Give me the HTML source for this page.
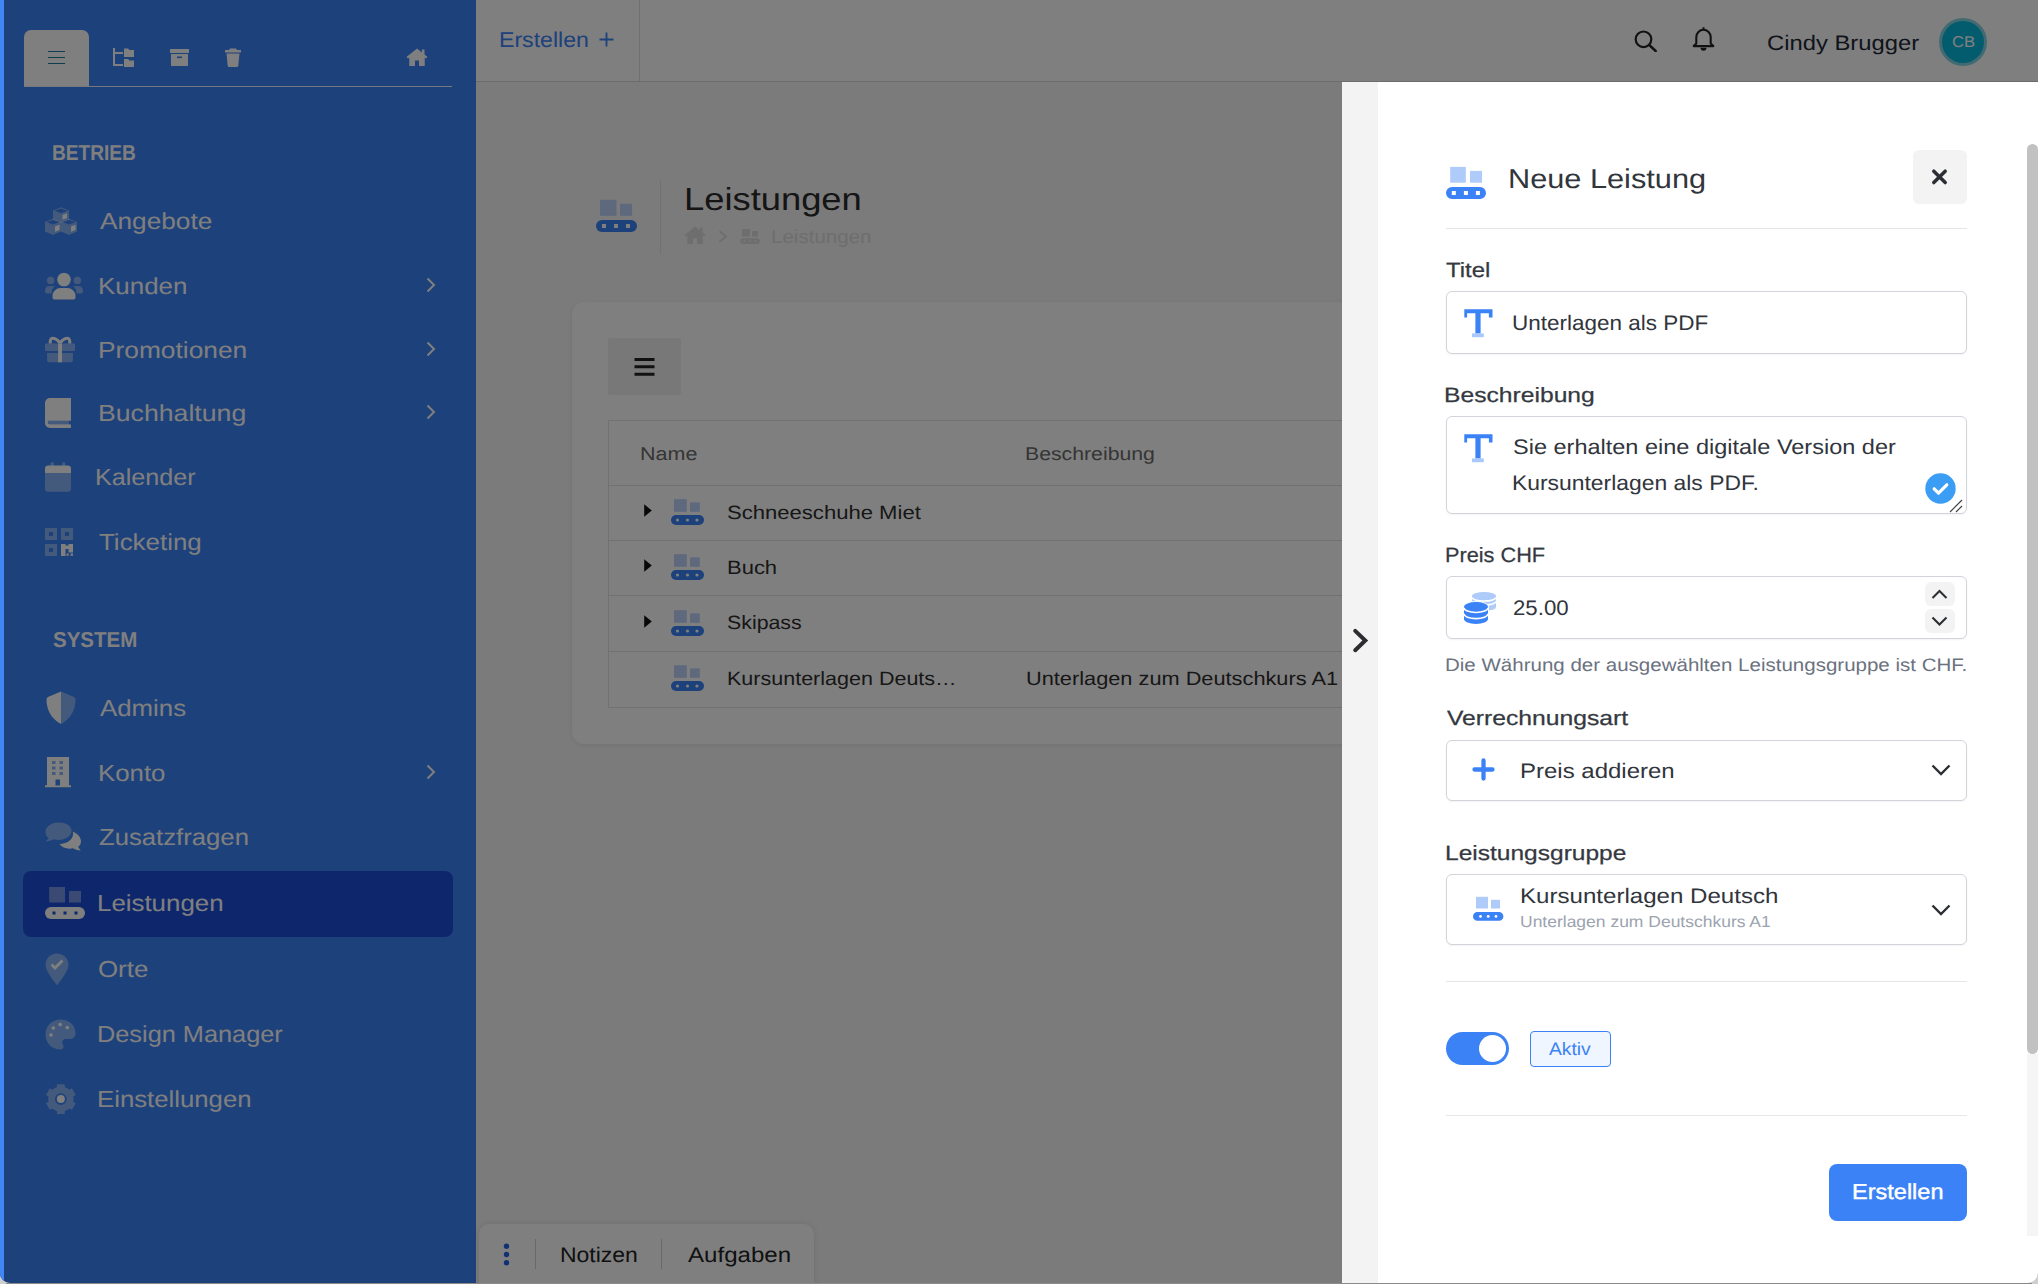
<!DOCTYPE html>
<html><head><meta charset="utf-8"><style>
html,body{margin:0;padding:0;width:2038px;height:1284px;overflow:hidden;background:#cfcfcf}
body{position:relative;font-family:"Liberation Sans", sans-serif}
.t{position:absolute;white-space:nowrap;line-height:1;text-rendering:geometricPrecision}
svg{display:block}
.bl{display:inline-block;width:0;height:0}
#win{position:absolute;left:0;top:0;width:2038px;height:1283px;border-radius:0 0 10px 10px;overflow:hidden}
.med{-webkit-text-stroke:0.35px currentColor}
</style></head><body>
<div id="win">
<div id="page">
<div style="position:absolute;left:476px;top:0px;width:1562px;height:1284px;background:#f6f6f6"></div>
<div style="position:absolute;left:476px;top:0px;width:1562px;height:81px;background:#fff;border-bottom:1px solid #d9d9d9"></div>
<div style="position:absolute;left:639px;top:0px;width:1px;height:81px;background:#e0e0e0"></div>
<div class="t" style="left:499.09px;top:30.01px;font-size:21.44px;color:#3b82f6;font-weight:400;transform:scaleX(1.0781);transform-origin:0 0;">Erstellen<span class="bl"></span></div>
<svg style="position:absolute;left:598px;top:31px;" width="17" height="17" viewBox="0 0 17 17"><path d="M8.5 1.5v14M1.5 8.5h14" stroke="#3b82f6" stroke-width="1.8"/></svg>
<div style="position:absolute;left:0px;top:0px;width:476px;height:1284px;background:#3b82f6"></div>
<div style="position:absolute;left:24px;top:30px;width:65px;height:56px;background:#fff;border-radius:7px 7px 0 0"></div>
<div style="position:absolute;left:24px;top:86px;width:428px;height:1px;background:rgba(255,255,255,0.9)"></div>
<svg style="position:absolute;left:48px;top:50px;" width="17" height="15" viewBox="0 0 17 15"><path d="M0 1.5h17M0 7.5h17M0 13.5h17" stroke="#1d7d9a" stroke-width="1.2"/></svg>
<svg style="position:absolute;left:113px;top:48px;" width="21" height="19" viewBox="0 0 21 19"><path d="M1 0v17h9M1 5h9" stroke="#fff" stroke-width="2" fill="none"/><path d="M11 0.5h4l1.5 1.5h4.5v7h-10z M11 11h4l1.5 1.5h4.5v6.5h-10z" fill="#fff"/></svg>
<svg style="position:absolute;left:170px;top:49px;" width="19" height="17" viewBox="0 0 19 17"><rect x="0" y="0" width="19" height="4" rx="0.5" fill="#fff"/><path d="M1 5h17v12h-17z" fill="#fff"/><rect x="7" y="7.5" width="5" height="1.6" fill="#3b82f6"/></svg>
<svg style="position:absolute;left:225px;top:48px;" width="16" height="19" viewBox="0 0 16 19"><path d="M5 0.5h6l1 1.5h4v2.5h-16v-2.5h4z" fill="#fff"/><path d="M1.5 5.5h13l-1.2 12.2a1.5 1.5 0 0 1-1.5 1.3h-7.6a1.5 1.5 0 0 1-1.5-1.3z" fill="#fff"/></svg>
<svg style="position:absolute;left:406px;top:48px;" width="22" height="18" viewBox="0 0 22 18"><path d="M11 0.5L0.5 9l1.5 1.6 1.3-1v8.4h5.7v-5.5h4v5.5h5.7v-8.4l1.3 1 1.5-1.6-3-2.4v-5h-2.6v3z" fill="#fff"/></svg>
<div class="t" style="left:52.31px;top:143.00px;font-size:21.51px;color:#fff;font-weight:700;transform:scaleX(0.8890);transform-origin:0 0;">BETRIEB<span class="bl"></span></div>
<div class="t" style="left:52.79px;top:630.01px;font-size:21.51px;color:#fff;font-weight:700;transform:scaleX(0.9529);transform-origin:0 0;">SYSTEM<span class="bl"></span></div>
<div style="position:absolute;left:23px;top:871px;width:430px;height:66px;background:#1d4ed8;border-radius:8px"></div>
<div class="t" style="left:99.73px;top:210.01px;font-size:23.11px;color:#fff;font-weight:400;transform:scaleX(1.1351);transform-origin:0 0;">Angebote<span class="bl"></span></div>
<div class="t" style="left:97.66px;top:275.01px;font-size:23.11px;color:#fff;font-weight:400;transform:scaleX(1.1224);transform-origin:0 0;">Kunden<span class="bl"></span></div>
<svg style="position:absolute;left:426px;top:277px;" width="10" height="16" viewBox="0 0 10 16"><path d="M1.5 1.5L8 8l-6.5 6.5" stroke="#fff" stroke-width="2" fill="none"/></svg>
<div class="t" style="left:97.53px;top:339.01px;font-size:23.11px;color:#fff;font-weight:400;transform:scaleX(1.1385);transform-origin:0 0;">Promotionen<span class="bl"></span></div>
<svg style="position:absolute;left:426px;top:341px;" width="10" height="16" viewBox="0 0 10 16"><path d="M1.5 1.5L8 8l-6.5 6.5" stroke="#fff" stroke-width="2" fill="none"/></svg>
<div class="t" style="left:97.50px;top:402.00px;font-size:23.11px;color:#fff;font-weight:400;transform:scaleX(1.1539);transform-origin:0 0;">Buchhaltung<span class="bl"></span></div>
<svg style="position:absolute;left:426px;top:404px;" width="10" height="16" viewBox="0 0 10 16"><path d="M1.5 1.5L8 8l-6.5 6.5" stroke="#fff" stroke-width="2" fill="none"/></svg>
<div class="t" style="left:94.73px;top:466.01px;font-size:23.11px;color:#fff;font-weight:400;transform:scaleX(1.0881);transform-origin:0 0;">Kalender<span class="bl"></span></div>
<div class="t" style="left:99.42px;top:531.00px;font-size:23.11px;color:#fff;font-weight:400;transform:scaleX(1.1215);transform-origin:0 0;">Ticketing<span class="bl"></span></div>
<div class="t" style="left:99.94px;top:697.01px;font-size:23.11px;color:#fff;font-weight:400;transform:scaleX(1.1167);transform-origin:0 0;">Admins<span class="bl"></span></div>
<div class="t" style="left:97.87px;top:762.00px;font-size:23.11px;color:#fff;font-weight:400;transform:scaleX(1.1174);transform-origin:0 0;">Konto<span class="bl"></span></div>
<svg style="position:absolute;left:426px;top:764px;" width="10" height="16" viewBox="0 0 10 16"><path d="M1.5 1.5L8 8l-6.5 6.5" stroke="#fff" stroke-width="2" fill="none"/></svg>
<div class="t" style="left:99.17px;top:826.00px;font-size:23.11px;color:#fff;font-weight:400;transform:scaleX(1.1116);transform-origin:0 0;">Zusatzfragen<span class="bl"></span></div>
<div class="t" style="left:97.37px;top:892.01px;font-size:23.11px;color:#fff;font-weight:400;transform:scaleX(1.1189);transform-origin:0 0;">Leistungen<span class="bl"></span></div>
<div class="t" style="left:98.27px;top:958.01px;font-size:23.11px;color:#fff;font-weight:400;transform:scaleX(1.1188);transform-origin:0 0;">Orte<span class="bl"></span></div>
<div class="t" style="left:97.41px;top:1023.01px;font-size:23.11px;color:#fff;font-weight:400;transform:scaleX(1.0955);transform-origin:0 0;">Design Manager<span class="bl"></span></div>
<div class="t" style="left:97.38px;top:1088.01px;font-size:23.11px;color:#fff;font-weight:400;transform:scaleX(1.1137);transform-origin:0 0;">Einstellungen<span class="bl"></span></div>
<svg style="position:absolute;left:45px;top:207px;" width="32" height="28" viewBox="0 0 32 28"><path d="M8 3.5L16 0.2L24 3.5V12.5L16 16L8 12.5Z" fill="rgba(255,255,255,0.4)"/><path d="M0 15L8 11.8L16 15V24.5L8 28L0 24.5Z" fill="rgba(255,255,255,0.4)"/><path d="M16 15L24 11.8L32 15V24.5L24 28L16 24.5Z" fill="rgba(255,255,255,0.4)"/><path d="M9.6 3.7L16 1.6L22.6 3.7L16 6.3z M1.6 15.1L8 13L14.6 15.1L8 17.4z M17.6 15.1L24 13L30.6 15.1L24 17.4z" fill="#3b82f6"/><path d="M17.5 8L22 6.2V11L17.5 12.8z M10 19.5L14.5 17.7V23L10 24.8z M26 19.5L30.5 17.7V23L26 24.8z" fill="#fff"/></svg>
<svg style="position:absolute;left:45px;top:273px;" width="38" height="27" viewBox="0 0 38 27"><circle cx="19" cy="6.6" r="6.8" fill="#fff"/><path d="M7.5 22.5a8 8 0 0 1 8-7.5h7a8 8 0 0 1 8 7.5v1.5a2.6 2.6 0 0 1-2.6 2.6h-17.8a2.6 2.6 0 0 1-2.6-2.6z" fill="#fff"/><circle cx="5.6" cy="7.4" r="3.7" fill="rgba(255,255,255,0.4)"/><circle cx="32.4" cy="7.4" r="3.7" fill="rgba(255,255,255,0.4)"/><path d="M0 17.5a4.5 4.5 0 0 1 4.5-4.5h5.5a9 9 0 0 0-3.5 7.5h-4.5a2 2 0 0 1-2-2z M38 17.5a4.5 4.5 0 0 0-4.5-4.5h-5.5a9 9 0 0 1 3.5 7.5h4.5a2 2 0 0 0 2-2z" fill="rgba(255,255,255,0.4)"/></svg>
<svg style="position:absolute;left:45px;top:336px;" width="30" height="27" viewBox="0 0 30 27"><rect x="0" y="7.6" width="30" height="7.4" rx="1.2" fill="rgba(255,255,255,0.4)"/><path d="M2.1 17h25.8v7.3a2 2 0 0 1-2 2h-21.8a2 2 0 0 1-2-2z" fill="rgba(255,255,255,0.4)"/><rect x="13.1" y="7.6" width="3.9" height="18.7" fill="#fff"/><path d="M15 7.3C12 2 5.2 0 5.2 5.5V7.6 M15 7.3C18 2 24.8 0 24.8 5.5V7.6" stroke="#fff" stroke-width="3" fill="none"/></svg>
<svg style="position:absolute;left:45px;top:398px;" width="26" height="30" viewBox="0 0 26 30"><path d="M5 0H26V22.5H5A0 0 0 0 0 5 22.5Z" fill="#fff"/><path d="M5 0H26V22.5H4.5a1.5 1.5 0 0 0 0 3.7H24.5a1.9 1.9 0 0 1 0 3.8H5a5 5 0 0 1-5-5V5a5 5 0 0 1 5-5z" fill="#fff"/><path d="M4.5 22.5H24V26.2H4.5a1.85 1.85 0 0 1 0-3.7z" fill="rgba(255,255,255,0.4)"/></svg>
<svg style="position:absolute;left:45px;top:462px;" width="26" height="30" viewBox="0 0 26 30"><path d="M0 11H26V26.5a3.3 3.3 0 0 1-3.3 3.3H3.3A3.3 3.3 0 0 1 0 26.5Z" fill="rgba(255,255,255,0.4)"/><path d="M3.3 3.6H22.7A3.3 3.3 0 0 1 26 6.9V11H0V6.9A3.3 3.3 0 0 1 3.3 3.6Z" fill="#fff"/><rect x="5.6" y="0.2" width="3.3" height="7.5" rx="1" fill="rgba(255,255,255,0.4)"/><rect x="17" y="0.2" width="3.3" height="7.5" rx="1" fill="rgba(255,255,255,0.4)"/></svg>
<svg style="position:absolute;left:45px;top:528px;" width="28" height="28" viewBox="0 0 28 28"><path d="M0 0h12v12h-12z M3.9 3.9v4.2h4.2v-4.2z M16 0h12v12h-12z M19.9 3.9v4.2h4.2v-4.2z M0 16h12v12h-12z M3.9 19.9v4.2h4.2v-4.2z" fill="rgba(255,255,255,0.4)" fill-rule="evenodd"/><path d="M16 16h4.5v1.5h3v-1.5h4.5v8.5h-4.5v-3.5h-3v7h-4.5z M21.5 25.5h2.2v2.2h-2.2z M25.5 25.5h2.5v2.2h-2.5z" fill="#fff"/></svg>
<svg style="position:absolute;left:46px;top:691px;" width="30" height="34" viewBox="0 0 30 34"><path d="M15 0.5L27.5 5.8a3 3 0 0 1 2 2.8c0 9-3.8 19-14.5 24.4z" fill="rgba(255,255,255,0.4)"/><path d="M15 0.5L2.5 5.8a3 3 0 0 0-2 2.8c0 9 3.8 19 14.5 24.4z" fill="#fff"/></svg>
<svg style="position:absolute;left:45px;top:757px;" width="26" height="31" viewBox="0 0 26 31"><path d="M2 0h22v28.2h2v2h-26v-2h2z" fill="#fff"/><path d="M7 4h3.5v3h-3.5z M14.5 4h3.5v3h-3.5z M7 9.5h3.5v3h-3.5z M14.5 9.5h3.5v3h-3.5z M7 15h3.5v3h-3.5z M14.5 15h3.5v3h-3.5z" fill="#3b82f6" fill-opacity="0.6"/><rect x="10.5" y="22.5" width="4.5" height="6" fill="#3b82f6"/></svg>
<svg style="position:absolute;left:45px;top:822px;" width="37" height="30" viewBox="0 0 37 30"><path d="M13.5 0.5C6 0.5 0.5 4.8 0.5 10c0 2.5 1.2 4.7 3.2 6.3L0.5 19.5c2.5 0 6.3-1 8.5-2.2 1.4.4 2.9.6 4.5.6 7.5 0 13-4.2 13-9.2S21 0.5 13.5 0.5z" fill="rgba(255,255,255,0.4)"/><path d="M27.8 9.5c.2.6.3 1.3.3 2 0 6-6 10.3-13.5 10.5 1.9 2.8 5.6 4.7 9.9 4.7 1.2 0 2.4-.2 3.5-.5 1.7 1.1 4.3 2.3 7.7 2.3l-2.6-3.4c1.8-1.4 2.9-3.3 2.9-5.5 0-4.3-3.2-7.8-8.2-10.1z" fill="#fff"/></svg>
<svg style="position:absolute;left:45px;top:887px;" width="40" height="32" viewBox="0 0 40 32"><rect x="4.2" y="0" width="15.8" height="15.5" fill="rgba(255,255,255,0.4)"/><rect x="24" y="4" width="12" height="11.5" fill="rgba(255,255,255,0.4)"/><path d="M6 20h28a6 6 0 0 1 0 12h-28a6 6 0 0 1 0-12z" fill="#fff"/><rect x="7.5" y="24.5" width="3" height="3" fill="#1d4ed8"/><rect x="18.5" y="24.5" width="3" height="3" fill="#1d4ed8"/><rect x="29.5" y="24.5" width="3" height="3" fill="#1d4ed8"/></svg>
<svg style="position:absolute;left:45px;top:953px;" width="24" height="33" viewBox="0 0 24 33"><path d="M12 0.5C5.6 0.5 0.5 5.5 0.5 11.8c0 5.6 6.6 14.2 11.5 20.4 4.9-6.2 11.5-14.8 11.5-20.4C23.5 5.5 18.4 0.5 12 0.5z" fill="rgba(255,255,255,0.4)"/><path d="M6.5 11.5l3.5 3.5 7.5-7.5" stroke="#fff" stroke-width="2.8" fill="none"/></svg>
<svg style="position:absolute;left:45px;top:1019px;" width="31" height="31" viewBox="0 0 31 31"><path d="M15.5 0.5C7 0.5 0.5 7 0.5 15.5c0 8.5 6.5 15 15 15 2 0 3-1.3 3-2.9 0-1.6-1.3-2.6-1.3-4.2 0-1.8 1.4-3.3 3.3-3.3h4.5c3.2 0 5.5-2.4 5.5-5.5C30.5 6 23.8 0.5 15.5 0.5z" fill="rgba(255,255,255,0.4)"/><circle cx="6" cy="16" r="1.8" fill="#fff"/><circle cx="8.3" cy="9" r="1.8" fill="#fff"/><circle cx="15.2" cy="5.6" r="1.8" fill="#fff"/><circle cx="22.3" cy="8.6" r="1.8" fill="#fff"/></svg>
<svg style="position:absolute;left:46px;top:1083px;" width="31" height="31" viewBox="0 0 31 31"><path d="M10.89 4.14 L11.04 1.18 L18.66 1.18 L18.81 4.14 L20.01 4.60 L21.15 5.19 L22.23 5.88 L23.23 6.69 L25.87 5.34 L29.68 11.94 L27.19 13.55 L27.38 14.82 L27.45 16.10 L27.38 17.38 L27.19 18.65 L29.68 20.26 L25.87 26.86 L23.23 25.51 L22.23 26.32 L21.15 27.01 L20.01 27.60 L18.81 28.06 L18.66 31.02 L11.04 31.02 L10.89 28.06 L9.69 27.60 L8.55 27.01 L7.47 26.32 L6.47 25.51 L3.83 26.86 L0.02 20.26 L2.51 18.65 L2.32 17.38 L2.25 16.10 L2.32 14.82 L2.51 13.55 L0.02 11.94 L3.83 5.34 L6.47 6.69 L7.47 5.88 L8.55 5.19 L9.69 4.60Z M20.75 16.10 A5.9 5.9 0 1 0 8.95 16.10 A5.9 5.9 0 1 0 20.75 16.10Z" fill="rgba(255,255,255,0.4)" fill-rule="evenodd"/><circle cx="14.85" cy="16.1" r="4" fill="#fff"/></svg>
<svg style="position:absolute;left:1634px;top:30px;" width="24" height="22" viewBox="0 0 24 22"><circle cx="9.5" cy="9.3" r="7.8" stroke="#222" stroke-width="2.2" fill="none"/><path d="M15.2 15l6.5 6" stroke="#222" stroke-width="2.4" stroke-linecap="round"/></svg>
<svg style="position:absolute;left:1692px;top:26px;" width="23" height="25" viewBox="0 0 23 25"><path d="M11.5 1.2v2.2M4.3 17.5V11a7.2 7.2 0 0 1 14.4 0v6.5l2.6 2.6H1.7z" stroke="#222" stroke-width="2.1" fill="none" stroke-linejoin="round"/><path d="M8.5 21.8a3 3 0 0 0 6 0z" fill="#222"/></svg>
<div class="t" style="left:1767.41px;top:34.01px;font-size:20.93px;color:#1f2937;font-weight:400;transform:scaleX(1.1379);transform-origin:0 0;">Cindy Brugger<span class="bl"></span></div>
<div style="position:absolute;left:1939px;top:18px;width:48px;height:48px;border-radius:50%;background:#84d4e4"></div>
<div style="position:absolute;left:1942px;top:21px;width:42px;height:42px;border-radius:50%;background:#04b8dc"></div>
<div class="t" style="left:1952.07px;top:35.00px;font-size:15.70px;color:#ffffff;font-weight:400;transform:scaleX(1.0588);transform-origin:0 0;">CB<span class="bl"></span></div>
<svg style="position:absolute;left:596px;top:199px;" width="41" height="33" viewBox="0 0 41 33"><rect x="4" y="0.8" width="16.5" height="16" fill="#bcd3fb"/><rect x="24" y="4.8" width="12.1" height="12" fill="#bcd3fb"/><path d="M6 21h29a6 6 0 0 1 0 12h-29a6 6 0 0 1 0-12z" fill="#3b82f6"/><rect x="6" y="25" width="4" height="4" fill="#fff"/><rect x="18" y="25" width="4" height="4" fill="#fff"/><rect x="30" y="25" width="4" height="4" fill="#fff"/></svg>
<div style="position:absolute;left:660px;top:180px;width:1px;height:74px;background:#e3e3e3"></div>
<div class="t" style="left:683.80px;top:184.01px;font-size:31.83px;color:#2a2a2a;font-weight:400;transform:scaleX(1.1414);transform-origin:0 0;">Leistungen<span class="bl"></span></div>
<svg style="position:absolute;left:684px;top:226px;" width="22" height="18" viewBox="0 0 22 18"><path d="M11 0.5L0.5 9l1.5 1.6 1.3-1v8.4h5.7v-5.5h4v5.5h5.7v-8.4l1.3 1 1.5-1.6-3-2.4v-5h-2.6v3z" fill="#dcdcdc"/></svg>
<svg style="position:absolute;left:718px;top:230px;" width="10" height="13" viewBox="0 0 10 13"><path d="M1.5 1.2L8 6.5l-6.5 5.3" stroke="#dcdcdc" stroke-width="2" fill="none"/></svg>
<svg style="position:absolute;left:740px;top:229px;" width="20" height="15" viewBox="0 0 20 15"><rect x="2" y="0" width="8" height="7.5" fill="#dcdcdc"/><rect x="12" y="2" width="6" height="5.5" fill="#dcdcdc"/><path d="M3 9.2h14a2.9 2.9 0 0 1 0 5.8h-14a2.9 2.9 0 0 1 0-5.8z" fill="#dcdcdc"/><circle cx="4.5" cy="12.1" r="0.9" fill="#f6f6f6"/><circle cx="10" cy="12.1" r="0.9" fill="#f6f6f6"/><circle cx="15.5" cy="12.1" r="0.9" fill="#f6f6f6"/></svg>
<div class="t" style="left:771.30px;top:228.00px;font-size:18.82px;color:#dcdcdc;font-weight:400;transform:scaleX(1.0917);transform-origin:0 0;">Leistungen<span class="bl"></span></div>
<div style="position:absolute;left:572px;top:302px;width:1000px;height:442px;background:#fff;border-radius:12px;box-shadow:0 1px 4px rgba(0,0,0,0.08)"></div>
<div style="position:absolute;left:608px;top:338px;width:73px;height:57px;background:#f0f0f0;border-radius:2px"></div>
<svg style="position:absolute;left:634px;top:358px;" width="21" height="18" viewBox="0 0 21 18"><path d="M0.5 1.5h20M0.5 8.8h20M0.5 16.2h20" stroke="#222" stroke-width="3"/></svg>
<div style="position:absolute;left:608px;top:420px;width:800px;height:288px;border:1px solid #e3e3e3;border-right:none;box-sizing:border-box"></div>
<div style="position:absolute;left:609px;top:485px;width:800px;height:1px;background:#e3e3e3"></div>
<div style="position:absolute;left:609px;top:540px;width:800px;height:1px;background:#e3e3e3"></div>
<div style="position:absolute;left:609px;top:595px;width:800px;height:1px;background:#e3e3e3"></div>
<div style="position:absolute;left:609px;top:651px;width:800px;height:1px;background:#e3e3e3"></div>
<div class="t" style="left:639.72px;top:445.01px;font-size:18.39px;color:#6b6b6b;font-weight:400;transform:scaleX(1.1722);transform-origin:0 0;">Name<span class="bl"></span></div>
<div class="t" style="left:1025.25px;top:445.01px;font-size:18.39px;color:#6b6b6b;font-weight:400;transform:scaleX(1.1561);transform-origin:0 0;">Beschreibung<span class="bl"></span></div>
<svg style="position:absolute;left:644px;top:504px;" width="8" height="13" viewBox="0 0 8 13"><path d="M0.2 0.2L7.8 6.5L0.2 12.8z" fill="#111"/></svg>
<svg style="position:absolute;left:671px;top:499px;" width="33" height="27" viewBox="0 0 33 27"><rect x="3" y="0.2" width="12.8" height="12.6" fill="#bcd3fb"/><rect x="19" y="3.4" width="9.8" height="9.4" fill="#bcd3fb"/><path d="M5 16h23a5 5 0 0 1 0 10h-23a5 5 0 0 1 0-10z" fill="#3b82f6"/><circle cx="6.5" cy="21" r="1.6" fill="#fff"/><circle cx="16.5" cy="21" r="1.6" fill="#fff"/><circle cx="26" cy="21" r="1.6" fill="#fff"/></svg>
<div class="t" style="left:727.41px;top:504.01px;font-size:19.19px;color:#2e2e2e;font-weight:400;transform:scaleX(1.1499);transform-origin:0 0;">Schneeschuhe Miet<span class="bl"></span></div>
<svg style="position:absolute;left:644px;top:559px;" width="8" height="13" viewBox="0 0 8 13"><path d="M0.2 0.2L7.8 6.5L0.2 12.8z" fill="#111"/></svg>
<svg style="position:absolute;left:671px;top:554px;" width="33" height="27" viewBox="0 0 33 27"><rect x="3" y="0.2" width="12.8" height="12.6" fill="#bcd3fb"/><rect x="19" y="3.4" width="9.8" height="9.4" fill="#bcd3fb"/><path d="M5 16h23a5 5 0 0 1 0 10h-23a5 5 0 0 1 0-10z" fill="#3b82f6"/><circle cx="6.5" cy="21" r="1.6" fill="#fff"/><circle cx="16.5" cy="21" r="1.6" fill="#fff"/><circle cx="26" cy="21" r="1.6" fill="#fff"/></svg>
<div class="t" style="left:726.59px;top:559.00px;font-size:19.19px;color:#2e2e2e;font-weight:400;transform:scaleX(1.1452);transform-origin:0 0;">Buch<span class="bl"></span></div>
<svg style="position:absolute;left:644px;top:615px;" width="8" height="13" viewBox="0 0 8 13"><path d="M0.2 0.2L7.8 6.5L0.2 12.8z" fill="#111"/></svg>
<svg style="position:absolute;left:671px;top:610px;" width="33" height="27" viewBox="0 0 33 27"><rect x="3" y="0.2" width="12.8" height="12.6" fill="#bcd3fb"/><rect x="19" y="3.4" width="9.8" height="9.4" fill="#bcd3fb"/><path d="M5 16h23a5 5 0 0 1 0 10h-23a5 5 0 0 1 0-10z" fill="#3b82f6"/><circle cx="6.5" cy="21" r="1.6" fill="#fff"/><circle cx="16.5" cy="21" r="1.6" fill="#fff"/><circle cx="26" cy="21" r="1.6" fill="#fff"/></svg>
<div class="t" style="left:727.44px;top:614.01px;font-size:19.19px;color:#2e2e2e;font-weight:400;transform:scaleX(1.1117);transform-origin:0 0;">Skipass<span class="bl"></span></div>
<svg style="position:absolute;left:671px;top:665px;" width="33" height="27" viewBox="0 0 33 27"><rect x="3" y="0.2" width="12.8" height="12.6" fill="#bcd3fb"/><rect x="19" y="3.4" width="9.8" height="9.4" fill="#bcd3fb"/><path d="M5 16h23a5 5 0 0 1 0 10h-23a5 5 0 0 1 0-10z" fill="#3b82f6"/><circle cx="6.5" cy="21" r="1.6" fill="#fff"/><circle cx="16.5" cy="21" r="1.6" fill="#fff"/><circle cx="26" cy="21" r="1.6" fill="#fff"/></svg>
<div class="t" style="left:726.63px;top:670.00px;font-size:19.19px;color:#2e2e2e;font-weight:400;transform:scaleX(1.1212);transform-origin:0 0;">Kursunterlagen Deuts…<span class="bl"></span></div>
<div class="t" style="left:1025.51px;top:670.00px;font-size:19.19px;color:#2e2e2e;font-weight:400;transform:scaleX(1.1341);transform-origin:0 0;">Unterlagen zum Deutschkurs A1<span class="bl"></span></div>
<div style="position:absolute;left:479px;top:1224px;width:335px;height:70px;background:#fff;border-radius:10px;box-shadow:0 0 6px rgba(0,0,0,0.1)"></div>
<svg style="position:absolute;left:502px;top:1243px;" width="9" height="23" viewBox="0 0 9 23"><circle cx="4.5" cy="3.2" r="2.7" fill="#2563eb"/><circle cx="4.5" cy="11.5" r="2.7" fill="#2563eb"/><circle cx="4.5" cy="19.8" r="2.7" fill="#2563eb"/></svg>
<div style="position:absolute;left:535px;top:1239px;width:1px;height:30px;background:#d0d0d0"></div>
<div style="position:absolute;left:661px;top:1239px;width:1px;height:30px;background:#d0d0d0"></div>
<div class="t" style="left:559.60px;top:1245.00px;font-size:21.22px;color:#222;font-weight:400;transform:scaleX(1.0827);transform-origin:0 0;">Notizen<span class="bl"></span></div>
<div class="t" style="left:687.74px;top:1245.00px;font-size:21.22px;color:#222;font-weight:400;transform:scaleX(1.1343);transform-origin:0 0;">Aufgaben<span class="bl"></span></div>
</div>
<div style="position:absolute;left:0px;top:0px;width:2038px;height:1284px;background:rgba(0,0,0,0.5)"></div>
<div style="position:absolute;left:0px;top:0px;width:4px;height:1284px;background:#4285f4"></div>
<div style="position:absolute;left:1342px;top:82px;width:696px;height:1202px;background:#fff"></div>
<div style="position:absolute;left:1342px;top:82px;width:36px;height:1202px;background:#f3f3f3"></div>
<svg style="position:absolute;left:1351px;top:628px;" width="18" height="26" viewBox="0 0 18 26"><path d="M4.2 2.9L14.3 12.5L4.2 22.2" stroke="#2b2d31" stroke-width="4" fill="none" stroke-linecap="round" stroke-linejoin="miter"/></svg>
<svg style="position:absolute;left:1445px;top:166px;" width="42" height="34" viewBox="0 0 42 34"><rect x="5.2" y="0.9" width="15.6" height="15.8" fill="#aecbfa"/><rect x="25" y="4.9" width="12" height="11.8" fill="#aecbfa"/><path d="M6.9 21.1h28.2a5.9 5.9 0 0 1 0 11.8h-28.2a5.9 5.9 0 0 1 0-11.8z" fill="#3b82f6"/><rect x="6.8" y="25" width="4" height="4" fill="#fff"/><rect x="18.9" y="25" width="4" height="4" fill="#fff"/><rect x="30.9" y="25" width="4" height="4" fill="#fff"/></svg>
<div class="t" style="left:1508.37px;top:165.01px;font-size:27.18px;color:#31353c;font-weight:400;transform:scaleX(1.1302);transform-origin:0 0;">Neue Leistung<span class="bl"></span></div>
<div style="position:absolute;left:1913px;top:150px;width:54px;height:54px;background:#f3f3f3;border-radius:6px"></div>
<svg style="position:absolute;left:1930px;top:167px;" width="19" height="19" viewBox="0 0 19 19"><path d="M3.8 4.2l11.4 11.4M15.2 4.2l-11.4 11.4" stroke="#2b2f33" stroke-width="3.5" stroke-linecap="round"/></svg>
<div style="position:absolute;left:1446px;top:228px;width:521px;height:1px;background:#e5e5e5"></div>
<div style="position:absolute;left:2027px;top:1054px;width:11px;height:182px;background:#f5f5f5"></div>
<div style="position:absolute;left:2027px;top:144px;width:11px;height:910px;background:#c1c1c1;border-radius:6px"></div>
<div class="t" style="left:1446.26px;top:261.00px;font-size:20.64px;color:#35393f;font-weight:400;transform:scaleX(1.1601);transform-origin:0 0;-webkit-text-stroke:0.25px currentColor">Titel<span class="bl"></span></div>
<div style="position:absolute;left:1446px;top:291px;width:521px;height:63px;border:1px solid #d1d5db;border-radius:6px;box-sizing:border-box;background:#fff;box-shadow:0 1px 2px rgba(0,0,0,0.05)"></div>
<svg style="position:absolute;left:1463.8px;top:308.7px;" width="29" height="29" viewBox="0 0 29 29"><path d="M0.3 0.3h28.2v8.1h-3.6v-4.2h-8.3v20.2h-5.2v-20.2h-8.3v4.2h-2.8z" fill="#3b82f6"/><rect x="8" y="24.4" width="11.8" height="3.8" fill="#a9c8fb"/></svg>
<div class="t" style="left:1512.46px;top:313.01px;font-size:21.00px;color:#31353c;font-weight:400;transform:scaleX(1.0703);transform-origin:0 0;">Unterlagen als PDF<span class="bl"></span></div>
<div class="t" style="left:1444.26px;top:386.00px;font-size:20.64px;color:#35393f;font-weight:400;transform:scaleX(1.1954);transform-origin:0 0;-webkit-text-stroke:0.25px currentColor">Beschreibung<span class="bl"></span></div>
<div style="position:absolute;left:1446px;top:416px;width:521px;height:98px;border:1px solid #d1d5db;border-radius:6px;box-sizing:border-box;background:#fff;box-shadow:0 1px 2px rgba(0,0,0,0.05)"></div>
<svg style="position:absolute;left:1463.8px;top:433.6px;" width="29" height="29" viewBox="0 0 29 29"><path d="M0.3 0.3h28.2v8.1h-3.6v-4.2h-8.3v20.2h-5.2v-20.2h-8.3v4.2h-2.8z" fill="#3b82f6"/><rect x="8" y="24.4" width="11.8" height="3.8" fill="#a9c8fb"/></svg>
<div class="t" style="left:1512.64px;top:437.01px;font-size:21.00px;color:#31353c;font-weight:400;transform:scaleX(1.1191);transform-origin:0 0;">Sie erhalten eine digitale Version der<span class="bl"></span></div>
<div class="t" style="left:1511.81px;top:473.01px;font-size:21.00px;color:#31353c;font-weight:400;transform:scaleX(1.0896);transform-origin:0 0;">Kursunterlagen als PDF.<span class="bl"></span></div>
<svg style="position:absolute;left:1925px;top:473px;" width="31" height="31" viewBox="0 0 31 31"><circle cx="15.5" cy="15.5" r="15.2" fill="#3b9ef4"/><path d="M9.2 15.8l4.3 4.3 8.3-8.3" stroke="#fff" stroke-width="3.2" fill="none" stroke-linecap="round" stroke-linejoin="round"/></svg>
<svg style="position:absolute;left:1948px;top:499px;" width="16" height="14" viewBox="0 0 16 14"><path d="M2 13L14 1M8 13l6-6" stroke="#444" stroke-width="1.2"/></svg>
<div class="t" style="left:1444.91px;top:546.01px;font-size:20.64px;color:#35393f;font-weight:400;transform:scaleX(1.0527);transform-origin:0 0;-webkit-text-stroke:0.25px currentColor">Preis CHF<span class="bl"></span></div>
<div style="position:absolute;left:1446px;top:576px;width:521px;height:63px;border:1px solid #d1d5db;border-radius:6px;box-sizing:border-box;background:#fff;box-shadow:0 1px 2px rgba(0,0,0,0.05)"></div>
<svg style="position:absolute;left:1458px;top:586px;" width="44" height="44" viewBox="0 0 44 44"><path d="M14 10 A12 3.9 0 0 1 38 10 V21 A12 3.9 0 0 1 14 21 Z" fill="#aecbfa"/><path d="M14 11.2 A12 3.9 0 0 0 38 11.2 M14 15.3 A12 3.9 0 0 0 38 15.3" stroke="#fff" stroke-width="1.5" fill="none"/><path d="M6 20.9 A12 4.8 0 0 1 30 20.9 V33.1 A12 4.8 0 0 1 6 33.1 Z" fill="#3b82f6" stroke="#fff" stroke-width="1.8" paint-order="stroke"/><path d="M6 21.7 A12 4.8 0 0 0 30 21.7 M6 27.8 A12 4.8 0 0 0 30 27.8" stroke="#fff" stroke-width="1.6" fill="none"/></svg>
<div class="t" style="left:1512.99px;top:598.01px;font-size:21.00px;color:#31353c;font-weight:400;transform:scaleX(1.0587);transform-origin:0 0;">25.00<span class="bl"></span></div>
<div style="position:absolute;left:1925px;top:582px;width:30px;height:24px;background:#f3f3f3;border-radius:6px"></div>
<div style="position:absolute;left:1925px;top:609px;width:30px;height:24px;background:#f3f3f3;border-radius:6px"></div>
<svg style="position:absolute;left:1931px;top:588px;" width="17" height="12" viewBox="0 0 17 12"><path d="M1.5 10L8.5 3l7 7" stroke="#2b2f33" stroke-width="2.1" fill="none"/></svg>
<svg style="position:absolute;left:1931px;top:615px;" width="17" height="12" viewBox="0 0 17 12"><path d="M1.5 2.5l7 7 7-7" stroke="#2b2f33" stroke-width="2.1" fill="none"/></svg>
<div class="t" style="left:1445.01px;top:656.01px;font-size:18.02px;color:#6b7280;font-weight:400;transform:scaleX(1.1387);transform-origin:0 0;">Die Währung der ausgewählten Leistungsgruppe ist CHF.<span class="bl"></span></div>
<div class="t" style="left:1446.78px;top:709.01px;font-size:20.64px;color:#35393f;font-weight:400;transform:scaleX(1.1972);transform-origin:0 0;-webkit-text-stroke:0.25px currentColor">Verrechnungsart<span class="bl"></span></div>
<div style="position:absolute;left:1446px;top:740px;width:521px;height:61px;border:1px solid #d1d5db;border-radius:6px;box-sizing:border-box;background:#fff;box-shadow:0 1px 2px rgba(0,0,0,0.05)"></div>
<svg style="position:absolute;left:1472px;top:758px;" width="23" height="23" viewBox="0 0 23 23"><path d="M11.5 2.5v18M2.5 11.5h18" stroke="#3b82f6" stroke-width="4.3" stroke-linecap="round"/></svg>
<div class="t" style="left:1519.82px;top:762.01px;font-size:20.93px;color:#31353c;font-weight:400;transform:scaleX(1.1467);transform-origin:0 0;">Preis addieren<span class="bl"></span></div>
<svg style="position:absolute;left:1930px;top:762px;" width="22" height="16" viewBox="0 0 22 16"><path d="M2.5 3.5l8.5 8.5 8.5-8.5" stroke="#2b2f33" stroke-width="2.4" fill="none"/></svg>
<div class="t" style="left:1444.87px;top:844.01px;font-size:20.64px;color:#35393f;font-weight:400;transform:scaleX(1.1894);transform-origin:0 0;-webkit-text-stroke:0.25px currentColor">Leistungsgruppe<span class="bl"></span></div>
<div style="position:absolute;left:1446px;top:874px;width:521px;height:71px;border:1px solid #d1d5db;border-radius:6px;box-sizing:border-box;background:#fff;box-shadow:0 1px 2px rgba(0,0,0,0.05)"></div>
<svg style="position:absolute;left:1473px;top:896px;" width="31" height="26" viewBox="0 0 31 26"><rect x="3" y="0.8" width="12" height="11.7" fill="#aecbfa"/><rect x="18" y="3.8" width="9.1" height="8.7" fill="#aecbfa"/><path d="M4.4 16h21.6a4.4 4.4 0 0 1 0 8.8h-21.6a4.4 4.4 0 0 1 0-8.8z" fill="#3b82f6"/><circle cx="7.5" cy="20.4" r="1.4" fill="#fff"/><circle cx="15.2" cy="20.4" r="1.4" fill="#fff"/><circle cx="23" cy="20.4" r="1.4" fill="#fff"/></svg>
<div class="t" style="left:1519.81px;top:886.01px;font-size:21.00px;color:#31353c;font-weight:400;transform:scaleX(1.1471);transform-origin:0 0;">Kursunterlagen Deutsch<span class="bl"></span></div>
<div class="t" style="left:1519.84px;top:915.00px;font-size:15.99px;color:#9ca3af;font-weight:400;transform:scaleX(1.0938);transform-origin:0 0;">Unterlagen zum Deutschkurs A1<span class="bl"></span></div>
<svg style="position:absolute;left:1930px;top:902px;" width="22" height="16" viewBox="0 0 22 16"><path d="M2.5 3.5l8.5 8.5 8.5-8.5" stroke="#2b2f33" stroke-width="2.4" fill="none"/></svg>
<div style="position:absolute;left:1446px;top:981px;width:521px;height:1px;background:#e5e7eb"></div>
<div style="position:absolute;left:1446px;top:1032px;width:63px;height:33px;background:#3b82f6;border-radius:17px"></div>
<div style="position:absolute;left:1479px;top:1035px;width:27px;height:27px;background:#fff;border-radius:50%"></div>
<div style="position:absolute;left:1530px;top:1031px;width:81px;height:36px;background:#eff6ff;border:1px solid #3b82f6;border-radius:4px;box-sizing:border-box"></div>
<div class="t" style="left:1549.25px;top:1040.01px;font-size:18.02px;color:#3b82f6;font-weight:400;transform:scaleX(1.0686);transform-origin:0 0;">Aktiv<span class="bl"></span></div>
<div style="position:absolute;left:1446px;top:1115px;width:521px;height:1px;background:#e5e7eb"></div>
<div style="position:absolute;left:1829px;top:1164px;width:138px;height:57px;background:#3b82f6;border-radius:8px"></div>
<div class="t" style="left:1852.06px;top:1181.01px;font-size:21.66px;color:#fff;font-weight:400;transform:scaleX(1.0857);transform-origin:0 0;-webkit-text-stroke:0.4px currentColor">Erstellen<span class="bl"></span></div>
</div><div style="position:absolute;left:6px;top:1283px;width:2026px;height:1px;background:#8c8a86"></div>
</body></html>
